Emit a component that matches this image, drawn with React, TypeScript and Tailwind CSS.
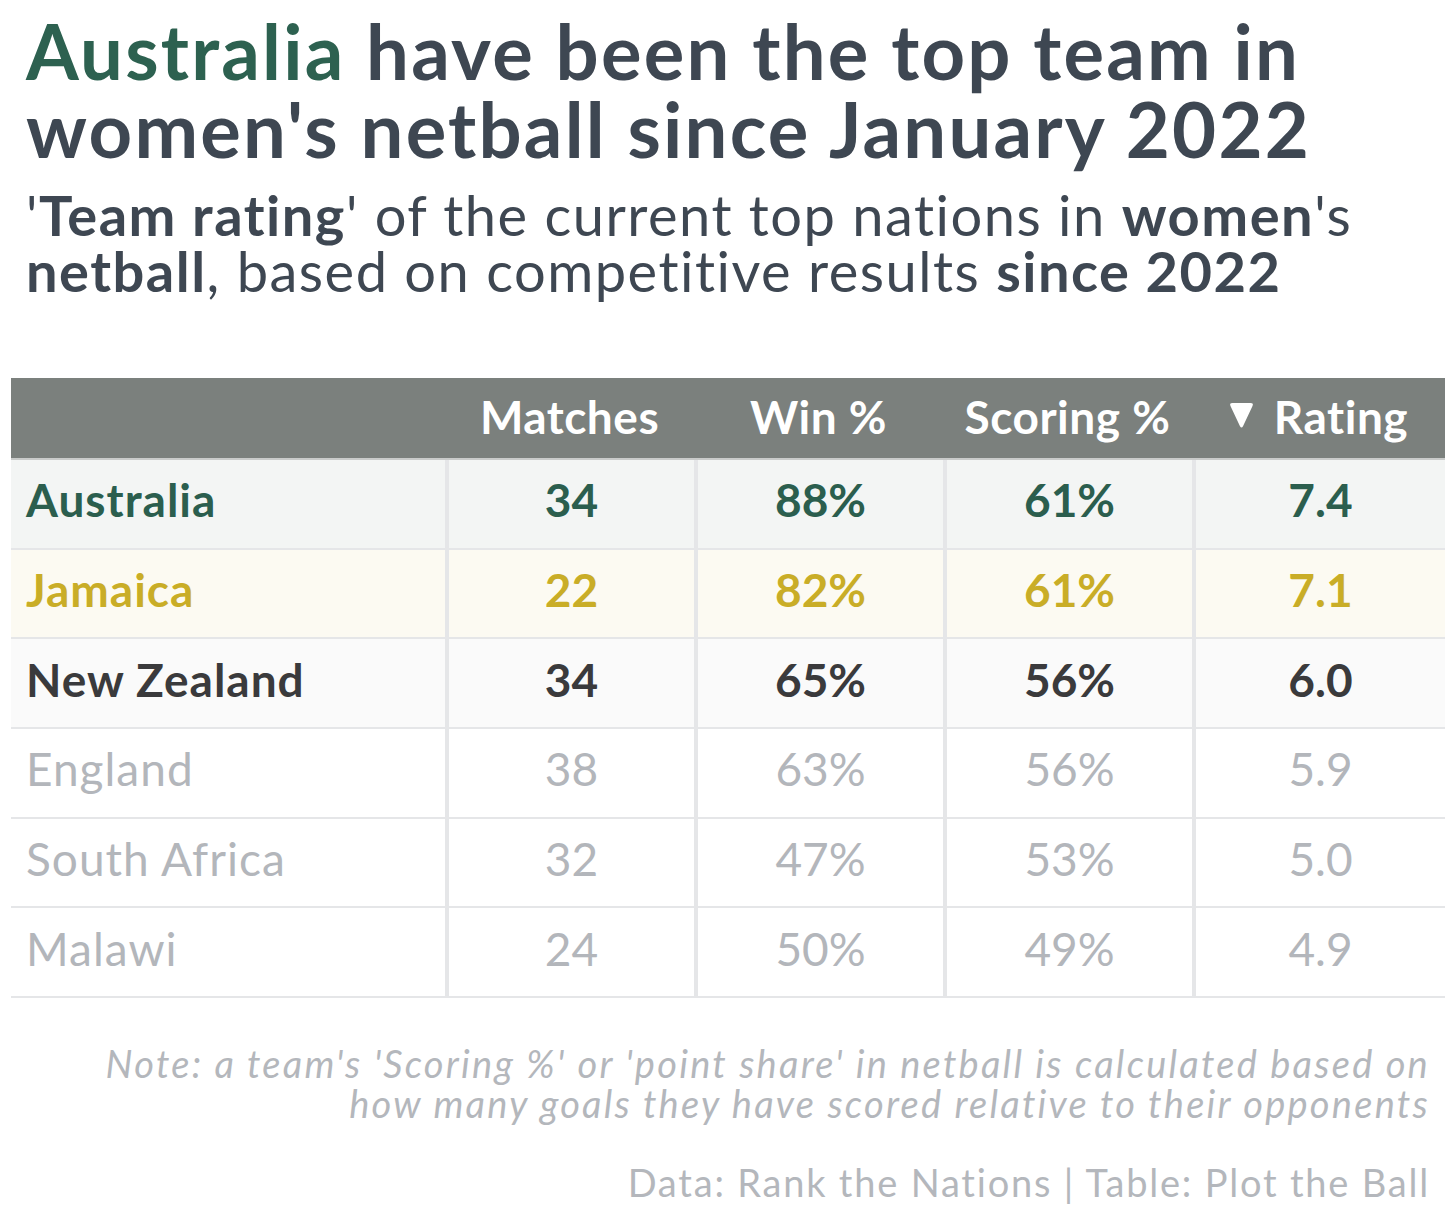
import React from "react";

type Row = {
  name: string;
  m: string;
  w: string;
  s: string;
  r: string;
  bg: string;
  color: string;
  weight: string;
};

const rows: Row[] = [
  { name: "Australia", m: "34", w: "88%", s: "61%", r: "7.4", bg: "bg-[#f3f5f4]", color: "text-[#2b5e4e]", weight: "font-bold" },
  { name: "Jamaica", m: "22", w: "82%", s: "61%", r: "7.1", bg: "bg-[#fcfaf2]", color: "text-[#c9ad27]", weight: "font-bold" },
  { name: "New Zealand", m: "34", w: "65%", s: "56%", r: "6.0", bg: "bg-[#fafafa]", color: "text-[#3a3a3c]", weight: "font-bold" },
  { name: "England", m: "38", w: "63%", s: "56%", r: "5.9", bg: "bg-white", color: "text-[#b3b6bb]", weight: "font-normal" },
  { name: "South Africa", m: "32", w: "47%", s: "53%", r: "5.0", bg: "bg-white", color: "text-[#b3b6bb]", weight: "font-normal" },
  { name: "Malawi", m: "24", w: "50%", s: "49%", r: "4.9", bg: "bg-white", color: "text-[#b3b6bb]", weight: "font-normal" },
];

function Triangle() {
  return (
    <svg width="25" height="28" viewBox="0 0 25 28" className="mr-[20px] mb-[3px]">
      <path d="M3.5 2 L21.5 2 Q25 2 23.4 5.2 L14 25.2 Q12.5 28 11 25.2 L1.6 5.2 Q0 2 3.5 2 Z" fill="#ffffff" />
    </svg>
  );
}

export default function App() {
  const font = { fontFamily: "Lato, 'Noto Sans', 'Liberation Sans', sans-serif" };
  return (
    <div className="w-[1456px] h-[1232px] bg-white overflow-hidden" style={font}>
      <div className="pl-[26px] pt-[12px]">
        <h1 className="text-[76px] leading-[78px] font-bold tracking-[2.2px] text-[#3e4752]">
          <span className="text-[#2d6150]">Australia</span> have been the top team in
          <br />
          women's netball since January 2022
        </h1>
        <p className="mt-[19px] text-[56px] leading-[56px] font-normal tracking-[1.5px] text-[#3e4752]">
          '<span className="font-bold">Team rating</span>' of the current top nations in{" "}
          <span className="font-bold">women</span>'s
          <br />
          <span className="font-bold">netball</span>, based on competitive results{" "}
          <span className="font-bold">since 2022</span>
        </p>
      </div>

      <div className="mt-[79px] mx-[11px] w-[1434px]">
        <div className="grid grid-cols-[434px_249px_249px_249px_253px] h-[82px] bg-[#7b807d] border-b-2 border-[#c9cbca] text-white text-[46px] font-bold tracking-[0.5px]">
          <div />
          <div className="flex items-center justify-center pb-[4px]">Matches</div>
          <div className="flex items-center justify-center pb-[4px]">Win %</div>
          <div className="flex items-center justify-center pb-[4px]">Scoring %</div>
          <div className="flex items-center justify-center pb-[4px]">
            <Triangle />
            Rating
          </div>
        </div>
        {rows.map((r) => (
          <div
            key={r.name}
            className={`grid grid-cols-[434px_249px_249px_249px_253px] h-[89.7px] border-b-2 border-[#e5e6e8] text-[46px] ${r.bg} ${r.color} ${r.weight}`}
          >
            <div className="flex items-center pl-[15px] pb-[8px] tracking-[1px]">{r.name}</div>
            <div className="flex items-center justify-center pb-[8px] border-l-4 border-[#e5e6e8]">{r.m}</div>
            <div className="flex items-center justify-center pb-[8px] border-l-4 border-[#e5e6e8]">{r.w}</div>
            <div className="flex items-center justify-center pb-[8px] border-l-4 border-[#e5e6e8]">{r.s}</div>
            <div className="flex items-center justify-center pb-[8px] border-l-4 border-[#e5e6e8]">{r.r}</div>
          </div>
        ))}
      </div>

      <div className="mt-[45px] pr-[26px] text-right text-[38px] leading-[40px] italic font-normal tracking-[2.25px] text-[#b4b7bc]">
        Note: a team's 'Scoring %' or 'point share' in netball is calculated based on
        <br />
        how many goals they have scored relative to their opponents
      </div>
      <div className="mt-[39px] pr-[26px] text-right text-[38px] leading-[40px] font-normal tracking-[1.8px] text-[#b4b7bc]">
        Data: Rank the Nations | Table: Plot the Ball
      </div>
    </div>
  );
}
